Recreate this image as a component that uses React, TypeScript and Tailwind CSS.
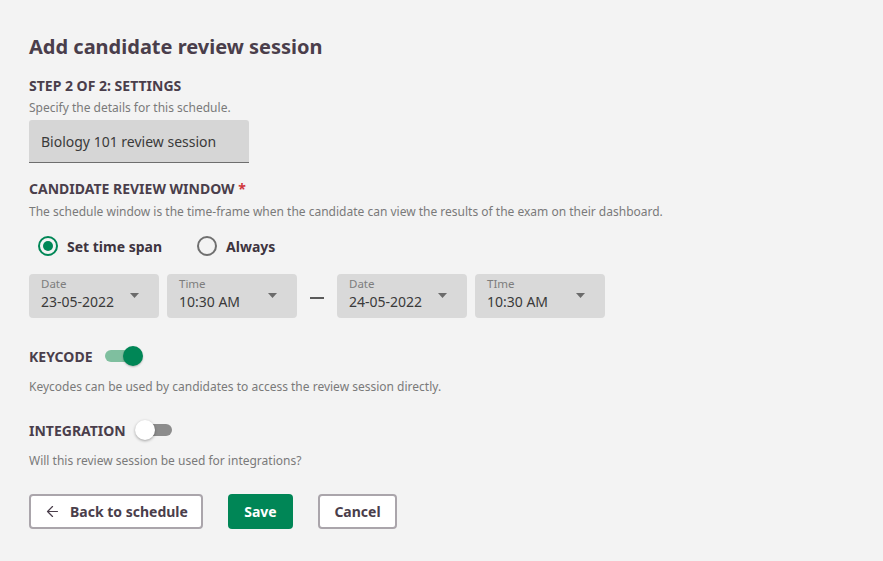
import { ArrowLeft } from "lucide-react";

function Caret() {
  return (
    <svg width="9" height="5" viewBox="0 0 9 5" className="fill-[#6b6b6b]">
      <path d="M0 0 L9 0 L4.5 5 Z" />
    </svg>
  );
}

function PickerField({ label, value }: { label: string; value: string }) {
  return (
    <div className="w-[130px] h-[44px] rounded-[4px] bg-[#d9d9d9] pl-3 pr-[24px] pt-[3px] relative flex flex-col">
      <span className="text-[11.5px] leading-[14px] text-[#7d7d7d]">{label}</span>
      <span className="mt-[1px] text-[14px] leading-[20px] text-[#3a3a3a]">{value}</span>
      <span className="absolute right-[20px] top-[19px]">
        <Caret />
      </span>
    </div>
  );
}

function Radio({ checked, label }: { checked: boolean; label: string }) {
  return (
    <label className="flex items-center gap-[9px]">
      <span
        className={
          checked
            ? "w-[20px] h-[20px] rounded-full border-2 border-[#008656] flex items-center justify-center"
            : "w-[20px] h-[20px] rounded-full border-2 border-[#6f6f6f]"
        }
      >
        {checked && <span className="w-[10px] h-[10px] rounded-full bg-[#008656]" />}
      </span>
      <span className="text-[14px] font-bold text-[#3e343f]">{label}</span>
    </label>
  );
}

export default function App() {
  return (
    <div
      className="w-[883px] h-[561px] bg-[#f3f3f3] pl-[29px] pt-[34px] text-[#4a3e4b]"
      style={{ fontFamily: '"Noto Sans", "Open Sans", sans-serif' }}
    >
      <h1 className="text-[20px] leading-[26px] font-bold">Add candidate review session</h1>

      <h2 className="mt-[17px] text-[14px] leading-[18px] font-bold uppercase">Step 2 of 2: Settings</h2>
      <p className="mt-[5px] text-[12px] leading-[16px] text-[#7a7a7a]">Specify the details for this schedule.</p>
      <div className="mt-[4px] w-[220px] h-[43px] bg-[#d6d6d6] rounded-t-[3px] border-b border-[#6e6e6e] flex items-center px-3 text-[14px] text-[#3a3a3a]">
        Biology 101 review session
      </div>

      <h2 className="mt-[17px] text-[14px] leading-[18px] font-bold uppercase">
        Candidate review window <span className="text-[#d0373c]">*</span>
      </h2>
      <p className="mt-[6px] text-[12px] leading-[16px] text-[#7a7a7a]">
        The schedule window is the time-frame when the candidate can view the results of the exam on their dashboard.
      </p>

      <div className="mt-[15px] ml-[9px] flex items-center gap-[35px] h-[22px]">
        <Radio checked label="Set time span" />
        <Radio checked={false} label="Always" />
      </div>

      <div className="mt-[17px] flex items-center">
        <div className="flex gap-[8px]">
          <PickerField label="Date" value="23-05-2022" />
          <PickerField label="Time" value="10:30 AM" />
        </div>
        <div className="w-[14px] h-[2px] bg-[#5a5a5a] mx-[13px] mt-[4px]" />
        <div className="flex gap-[8px]">
          <PickerField label="Date" value="24-05-2022" />
          <PickerField label="TIme" value="10:30 AM" />
        </div>
      </div>

      <div className="mt-[27px] flex items-center gap-[12px] h-[22px]">
        <h2 className="text-[14px] font-bold uppercase">Keycode</h2>
        <div className="relative w-[38px] h-[20px] flex items-center">
          <div className="w-[34px] h-[12px] rounded-full bg-[#7fbf9f]" />
          <div className="absolute right-0 top-0 w-[20px] h-[20px] rounded-full bg-[#008656] shadow-[0_1px_2px_rgba(0,0,0,0.25)]" />
        </div>
      </div>
      <p className="mt-[12px] text-[12px] leading-[16px] text-[#7a7a7a]">
        Keycodes can be used by candidates to access the review session directly.
      </p>

      <div className="mt-[24px] flex items-center gap-[9px] h-[22px]">
        <h2 className="text-[14px] font-bold uppercase">Integration</h2>
        <div className="relative w-[37px] h-[20px] flex items-center justify-end">
          <div className="w-[31px] h-[12px] rounded-full bg-[#8c8c8c]" />
          <div className="absolute left-0 top-0 w-[20px] h-[20px] rounded-full bg-white shadow-[0_1px_3px_rgba(0,0,0,0.35)]" />
        </div>
      </div>
      <p className="mt-[12px] text-[12px] leading-[16px] text-[#7a7a7a]">
        Will this review session be used for integrations?
      </p>

      <div className="mt-[25px] flex items-center">
        <button className="w-[174px] h-[35px] rounded-[4px] border-2 border-[#aaa5ab] bg-white flex items-center pl-[13px] gap-[9px] text-[14px] font-bold text-[#4a3e4b]">
          <ArrowLeft size={17} strokeWidth={1.75} />
          Back to schedule
        </button>
        <button className="ml-[25px] w-[65px] h-[35px] rounded-[4px] bg-[#008656] text-white text-[14px] font-bold">
          Save
        </button>
        <button className="ml-[25px] w-[79px] h-[35px] rounded-[4px] border-2 border-[#aaa5ab] bg-white text-[14px] font-bold text-[#4a3e4b]">
          Cancel
        </button>
      </div>
    </div>
  );
}
